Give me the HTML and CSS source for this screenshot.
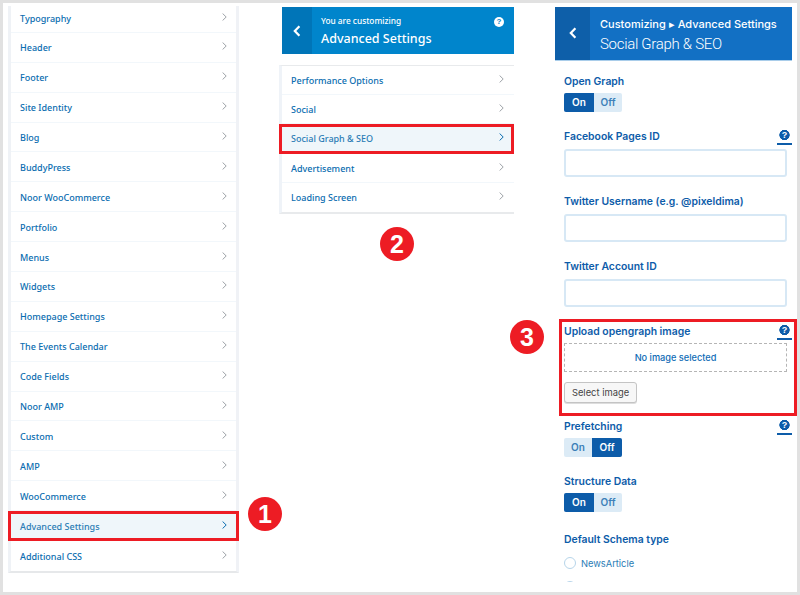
FILE: index.html
```html
<!DOCTYPE html>
<html lang="en">
<head>
<meta charset="utf-8">
<title>Customizer steps</title>
<link rel="stylesheet" href="styles.css">
</head>
<body>
<div class="frame">
  <svg width="0" height="0" class="defs"><symbol id="chev" viewBox="0 0 5 8"><path d="M.6.5 4.2 4 .6 7.5" fill="none" stroke="currentColor" stroke-width="1"/></symbol><symbol id="back" viewBox="0 0 8 12"><path d="M6.4 1.2 1.8 6l4.6 4.8" fill="none" stroke="currentColor" stroke-width="2.2"/></symbol></svg>
  <section class="col-menu">
    <ul class="menu menu-main">
      <li class="row row-first">Typography<svg class="chev"><use href="#chev"/></svg></li>
      <li class="row">Header<svg class="chev"><use href="#chev"/></svg></li>
      <li class="row">Footer<svg class="chev"><use href="#chev"/></svg></li>
      <li class="row">Site Identity<svg class="chev"><use href="#chev"/></svg></li>
      <li class="row">Blog<svg class="chev"><use href="#chev"/></svg></li>
      <li class="row">BuddyPress<svg class="chev"><use href="#chev"/></svg></li>
      <li class="row">Noor WooCommerce<svg class="chev"><use href="#chev"/></svg></li>
      <li class="row">Portfolio<svg class="chev"><use href="#chev"/></svg></li>
      <li class="row">Menus<svg class="chev"><use href="#chev"/></svg></li>
      <li class="row">Widgets<svg class="chev"><use href="#chev"/></svg></li>
      <li class="row">Homepage Settings<svg class="chev"><use href="#chev"/></svg></li>
      <li class="row">The Events Calendar<svg class="chev"><use href="#chev"/></svg></li>
      <li class="row">Code Fields<svg class="chev"><use href="#chev"/></svg></li>
      <li class="row">Noor AMP<svg class="chev"><use href="#chev"/></svg></li>
      <li class="row">Custom<svg class="chev"><use href="#chev"/></svg></li>
      <li class="row">AMP<svg class="chev"><use href="#chev"/></svg></li>
      <li class="row">WooCommerce<svg class="chev"><use href="#chev"/></svg></li>
      <li class="row row-on">Advanced Settings<svg class="chev"><use href="#chev"/></svg></li>
      <li class="row">Additional CSS<svg class="chev"><use href="#chev"/></svg></li>
    </ul>
  </section>

  <section class="col-sub">
    <header class="head-a">
      <div class="back-a"><svg class="back-icon"><use href="#back"/></svg></div>
      <div class="head-a-text">
        <div class="head-a-small">You are customizing</div>
        <div class="head-a-title">Advanced Settings</div>
      </div>
      <span class="help-white">?</span>
    </header>
    <ul class="menu menu-sub">
      <li class="row">Performance Options<svg class="chev"><use href="#chev"/></svg></li>
      <li class="row">Social<svg class="chev"><use href="#chev"/></svg></li>
      <li class="row row-on">Social Graph &amp; SEO<svg class="chev"><use href="#chev"/></svg></li>
      <li class="row">Advertisement<svg class="chev"><use href="#chev"/></svg></li>
      <li class="row">Loading Screen<svg class="chev"><use href="#chev"/></svg></li>
    </ul>
  </section>

  <section class="col-form">
    <header class="head-b">
      <div class="back-b"><svg class="back-icon"><use href="#back"/></svg></div>
      <div>
        <div class="head-b-small">Customizing ▸ Advanced Settings</div>
        <div class="head-b-title">Social Graph &amp; SEO</div>
      </div>
    </header>

    <div class="field f-open">
      <div class="label">Open Graph</div>
      <div class="toggle"><span class="t on">On</span><span class="t">Off</span></div>
    </div>
    <div class="field f-input">
      <div class="label">Facebook Pages ID<span class="help">?</span></div>
      <div class="input"></div>
    </div>
    <div class="field f-input">
      <div class="label">Twitter Username (e.g. @pixeldima)</div>
      <div class="input"></div>
    </div>
    <div class="field f-input">
      <div class="label">Twitter Account ID</div>
      <div class="input"></div>
    </div>
    <div class="upload">
      <div class="label">Upload opengraph image<span class="help">?</span></div>
      <div class="drop">No image selected</div>
      <div class="btn">Select image</div>
    </div>
    <div class="field f-pre">
      <div class="label">Prefetching<span class="help">?</span></div>
      <div class="toggle"><span class="t">On</span><span class="t on">Off</span></div>
    </div>
    <div class="field f-struct">
      <div class="label">Structure Data</div>
      <div class="toggle"><span class="t on">On</span><span class="t">Off</span></div>
    </div>
    <div class="field f-schema">
      <div class="label">Default Schema type</div>
      <div class="radio-row"><span class="radio"></span>NewsArticle</div>
      <div class="radio-row"><span class="radio"></span></div>
    </div>
  </section>

  <span class="badge badge-1">1</span>
  <span class="badge badge-2">2</span>
  <span class="badge badge-3">3</span>
</div>
</body>
</html>
```

FILE: styles.css
```css
* { box-sizing: border-box; }
html, body { margin: 0; padding: 0; background: #fff; }
.frame {
  position: relative;
  display: flex;
  width: 800px;
  height: 595px;
  border: 3px solid #e1e1e1;
  overflow: hidden;
  background: #fff;
}
.defs { position: absolute; }
ul { list-style: none; margin: 0; padding: 0; }

.col-menu { width: 231px; margin-left: 5px; flex: none; }
.col-sub { width: 235px; margin-left: 40px; flex: none; }
.col-form {
  width: 242px;
  margin-left: 41px;
  flex: none;
  height: 579px;
  overflow: hidden;
  font-family: Inter, Roboto, sans-serif;
}

.menu {
  font-family: "Noto Sans", "Open Sans", sans-serif;
  font-size: 9px;
  font-weight: 500;
  color: #0a6db0;
  background: #fff;
}
.menu-main {
  margin-top: 3px;
  border-left: 3px solid #eff2f6;
  border-right: 3px solid #f0f2f6;
  border-bottom: 2px solid #e6e8ea;
}
.menu-sub {
  margin-top: 11px;
  border-left: 3px solid #eff3f8;
  border-top: 1px solid #e8eaec;
  border-bottom: 2px solid #e8eaec;
}
.row {
  display: flex;
  align-items: center;
  justify-content: space-between;
  height: 29.9px;
  padding: 1px 9px 0 9px;
  border-bottom: 1px solid #f2f7fb;
}
.row-first { height: 26.9px; padding-top: 0; padding-bottom: 1px; }
.menu-sub .row { height: 29.2px; padding-right: 10px; }
.row:last-child { border-bottom: 0; }
.row-on {
  color: #2a7cb5;
  background: #eff6fa;
  outline: 3px solid #ed1c24;
  outline-offset: -3px;
  position: relative;
}
.menu-main .row-on { margin-left: -3px; margin-right: -3px; padding-left: 12px; padding-right: 12px; }
.menu-sub .row-on { margin-left: -3px; padding-left: 12px; }
.chev { width: 5px; height: 8px; color: #9ea3a8; flex: none; margin-top: -3px; }
.row-on .chev { color: #0a6db0; }

.head-a {
  display: flex;
  margin: 4px 0 0 3px;
  height: 47px;
  background: #0085cc;
  color: #fff;
  font-family: "Noto Sans", "Open Sans", sans-serif;
  position: relative;
}
.back-a {
  width: 30px;
  background: #0075b8;
  display: flex;
  justify-content: center;
  padding-top: 18px;
}
.back-icon { width: 8px; height: 12px; color: #fff; }
.head-a-text { margin-left: 9px; }
.head-a-small { font-size: 8.3px; line-height: 12px; margin-top: 8px; font-weight: 500; }
.head-a-title { font-size: 12.5px; line-height: 18px; margin-top: 3px; font-weight: 500; }
.help-white {
  position: absolute;
  right: 10px;
  top: 10px;
  width: 10px;
  height: 10px;
  border-radius: 50%;
  background: #fff;
  color: #0085cc;
  font: 700 8px/10px "Liberation Sans", sans-serif;
  text-align: center;
}

.head-b {
  display: flex;
  width: 237px;
  height: 54px;
  margin-top: 4px;
  background: #1270c4;
  border-bottom: 1px solid #a9cdea;
  color: #fff;
}
.back-b {
  width: 35px;
  margin-right: 10px;
  background: #0e5fa9;
  display: flex;
  justify-content: center;
  padding-top: 20px;
}
.head-b-small { font-size: 11px; line-height: 13px; margin-top: 11px; font-weight: 500; white-space: nowrap; }
.head-b-title { font-family: Roboto, sans-serif; font-size: 15px; line-height: 20px; margin-top: 3px; font-weight: 300; letter-spacing: -.3px; }

.field { margin: 0 10px 0 9px; }
.label {
  display: flex;
  justify-content: space-between;
  align-items: center;
  position: relative;
  font-size: 10.4px;
  line-height: 14px;
  padding-top: 1px;
  font-weight: 600;
  color: #0d5ca9;
}
.f-open { margin-top: 13px; }
.f-input { margin-top: 17px; }
.toggle {
  display: flex;
  width: 58px;
  height: 19px;
  margin-top: 4px;
  border-radius: 2px;
  overflow: hidden;
  background: #dcebf6;
}
.t {
  flex: 1;
  text-align: center;
  font-size: 10px;
  line-height: 19px;
  font-weight: 600;
  color: #3b7fb8;
}
.t.on { background: #0d5ca9; color: #fff; flex: none; width: 30px; }
.help {
  position: absolute;
  right: -5px;
  top: 0;
  width: 15px;
  height: 16px;
  border-bottom: 2px solid #0d5ca9;
  color: #fff;
  font: 700 9px/12px "Liberation Sans", sans-serif;
  text-align: center;
  background: radial-gradient(circle at 7.5px 6px, #0d5ca9 4.9px, transparent 5.4px);
}
.input {
  height: 28px;
  margin-top: 5px;
  border: 2px solid #d7e8f5;
  border-radius: 3px;
  background: #fff;
}
.upload {
  margin-top: 12px;
  margin-left: 4px;
  padding: 5px 10px 13px 5px;
  height: 97px;
  outline: 3px solid #ed1c24;
  outline-offset: -3px;
}
.drop {
  height: 29px;
  margin-top: 4px;
  border: 1px dashed #b5b5b5;
  text-align: center;
  font-size: 9.2px;
  line-height: 27px;
  font-weight: 500;
  color: #0d6bb5;
}
.btn {
  width: 73px;
  height: 21px;
  margin-top: 10px;
  border: 1px solid #c4c4c4;
  border-radius: 3px;
  background: #f7f7f7;
  box-shadow: 0 1px 0 #ddd;
  text-align: center;
  font-size: 9.4px;
  line-height: 19px;
  color: #444;
}
.f-pre { margin-top: 3px; }
.f-struct { margin-top: 17px; }
.f-schema { margin-top: 20px; }
.radio-row {
  display: flex;
  align-items: center;
  gap: 5px;
  height: 16px;
  margin-top: 8px;
  font-size: 9.3px;
  color: #2a7cb5;
}
.radio-row + .radio-row { margin-top: 8px; }
.radio {
  width: 12px;
  height: 12px;
  border: 1px solid #b7d5ea;
  border-radius: 50%;
  background: #fff;
  flex: none;
}

.badge {
  position: absolute;
  width: 34px;
  height: 34px;
  border-radius: 50%;
  background: #ed1c24;
  color: #fff;
  font: 700 25px/34px "Liberation Sans", sans-serif;
  text-align: center;
}
.badge-1 { left: 245px; top: 494px; }
.badge-2 { left: 377px; top: 224px; }
.badge-3 { left: 507px; top: 317px; }
```
